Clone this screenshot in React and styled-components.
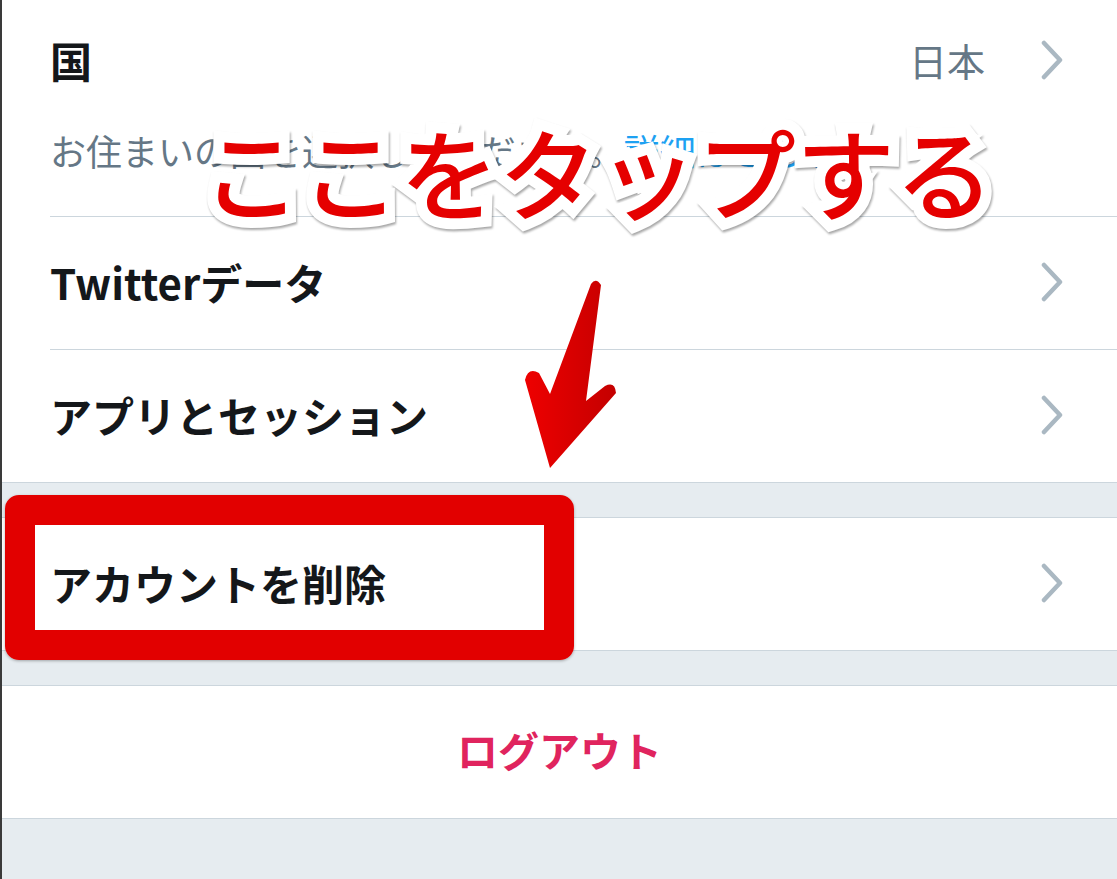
import React from 'react'
import styled, { createGlobalStyle } from 'styled-components'

const GlobalStyle = createGlobalStyle`
  html, body {
    margin: 0;
    padding: 0;
    background: #e6ecf0;
  }
  body {
    font-family: "Noto Sans CJK JP", "Noto Sans", sans-serif;
  }
  * { box-sizing: border-box; }
`

const Page = styled.div`
  position: relative;
  width: 1117px;
  height: 879px;
  overflow: hidden;
  background: #e6ecf0;
  border-left: 2px solid #3a3a3a;
`

const Section = styled.div`
  background: #fff;
  border-top: ${p => (p.$first ? 'none' : '1px solid #ccd6dd')};
  border-bottom: 1px solid #ccd6dd;
`

const Gap = styled.div`
  height: 34px;
`

const CountryBlock = styled.div`
  height: 216px;
  padding: 0 54px 0 46px;
`

const CountryTop = styled.div`
  height: 126px;
  padding-bottom: 4px;
  display: flex;
  align-items: center;
`

const Sub = styled.div`
  font-size: 36px;
  line-height: 40px;
  margin-top: 4px;
  color: #657786;
  white-space: nowrap;
  padding-left: 2px;
  span {
    color: #1da1f2;
  }
`

const Row = styled.div`
  height: 132px;
  display: flex;
  align-items: center;
  padding: 0 54px 0 46px;
  justify-content: ${p => (p.$center ? 'center' : 'flex-start')};
`

const Divider = styled.div`
  height: 1px;
  margin-left: 48px;
  background: #ccd6dd;
`

const Title = styled.div`
  flex: 1;
  font-size: 42px;
  font-weight: 700;
  color: #14171a;
  padding-left: 2px;
  margin-top: -4px;
`

const Value = styled.div`
  font-size: 38px;
  color: #657786;
  margin-right: 56px;
  margin-top: -4px;
`

const Logout = styled.div`
  font-size: 41px;
  font-weight: 700;
  color: #e0245e;
  margin: -6px 0 0 8px;
`

const Chevron = styled.svg`
  width: 22px;
  height: 40px;
  flex-shrink: 0;
  margin-top: -2px;
`

const Callout = styled.div`
  position: absolute;
  left: 200px;
  top: 105px;
  font-size: 99px;
  line-height: 130px;
  font-weight: 500;
  color: #e50000;
  white-space: nowrap;
  -webkit-text-stroke: 22px #fff;
  paint-order: stroke fill;
  filter: drop-shadow(1px 2px 1px rgba(0, 0, 0, 0.35));
`

const Arrow = styled.svg`
  position: absolute;
  left: 500px;
  top: 270px;
  width: 130px;
  height: 210px;
`

const Frame = styled.div`
  position: absolute;
  left: 3px;
  top: 495px;
  width: 569px;
  height: 165px;
  border: 30px solid #e20000;
  border-radius: 14px;
  box-shadow: 0 1px 3px rgba(0, 0, 0, 0.3);
`

const ChevronIcon = () => (
  <Chevron viewBox="0 0 22 40">
    <polyline points="3,3 19,20 3,37" fill="none" stroke="#aab8c2" strokeWidth="4.5" strokeLinecap="round" strokeLinejoin="round" />
  </Chevron>
)

export default function App() {
  return (
    <>
      <GlobalStyle />
      <Page>
        <Section $first>
          <CountryBlock>
            <CountryTop>
              <Title>国</Title>
              <Value>日本</Value>
              <ChevronIcon />
            </CountryTop>
            <Sub>お住まいの国を選択してください。<span>詳細はこちら</span></Sub>
          </CountryBlock>
          <Divider />
          <Row>
            <Title>Twitterデータ</Title>
            <ChevronIcon />
          </Row>
          <Divider />
          <Row>
            <Title>アプリとセッション</Title>
            <ChevronIcon />
          </Row>
        </Section>
        <Gap />
        <Section>
          <Row>
            <Title>アカウントを削除</Title>
            <ChevronIcon />
          </Row>
        </Section>
        <Gap />
        <Section>
          <Row $center>
            <Logout>ログアウト</Logout>
          </Row>
        </Section>

        <Callout>ここをタップする</Callout>
        <Arrow viewBox="500 270 130 210">
          <defs>
            <linearGradient id="arrowFill" x1="0" y1="0" x2="1" y2="0">
              <stop offset="0" stopColor="#ee0000" />
              <stop offset="1" stopColor="#c40000" />
            </linearGradient>
          </defs>
          <path
            d="M589 284 Q594 277 599 285 L584 401 L603 386 Q613 381 614 393 L548 468 L523 380 Q526 367 537 373 L548 394 Z"
            fill="url(#arrowFill)"
          />
        </Arrow>
        <Frame />
      </Page>
    </>
  )
}
